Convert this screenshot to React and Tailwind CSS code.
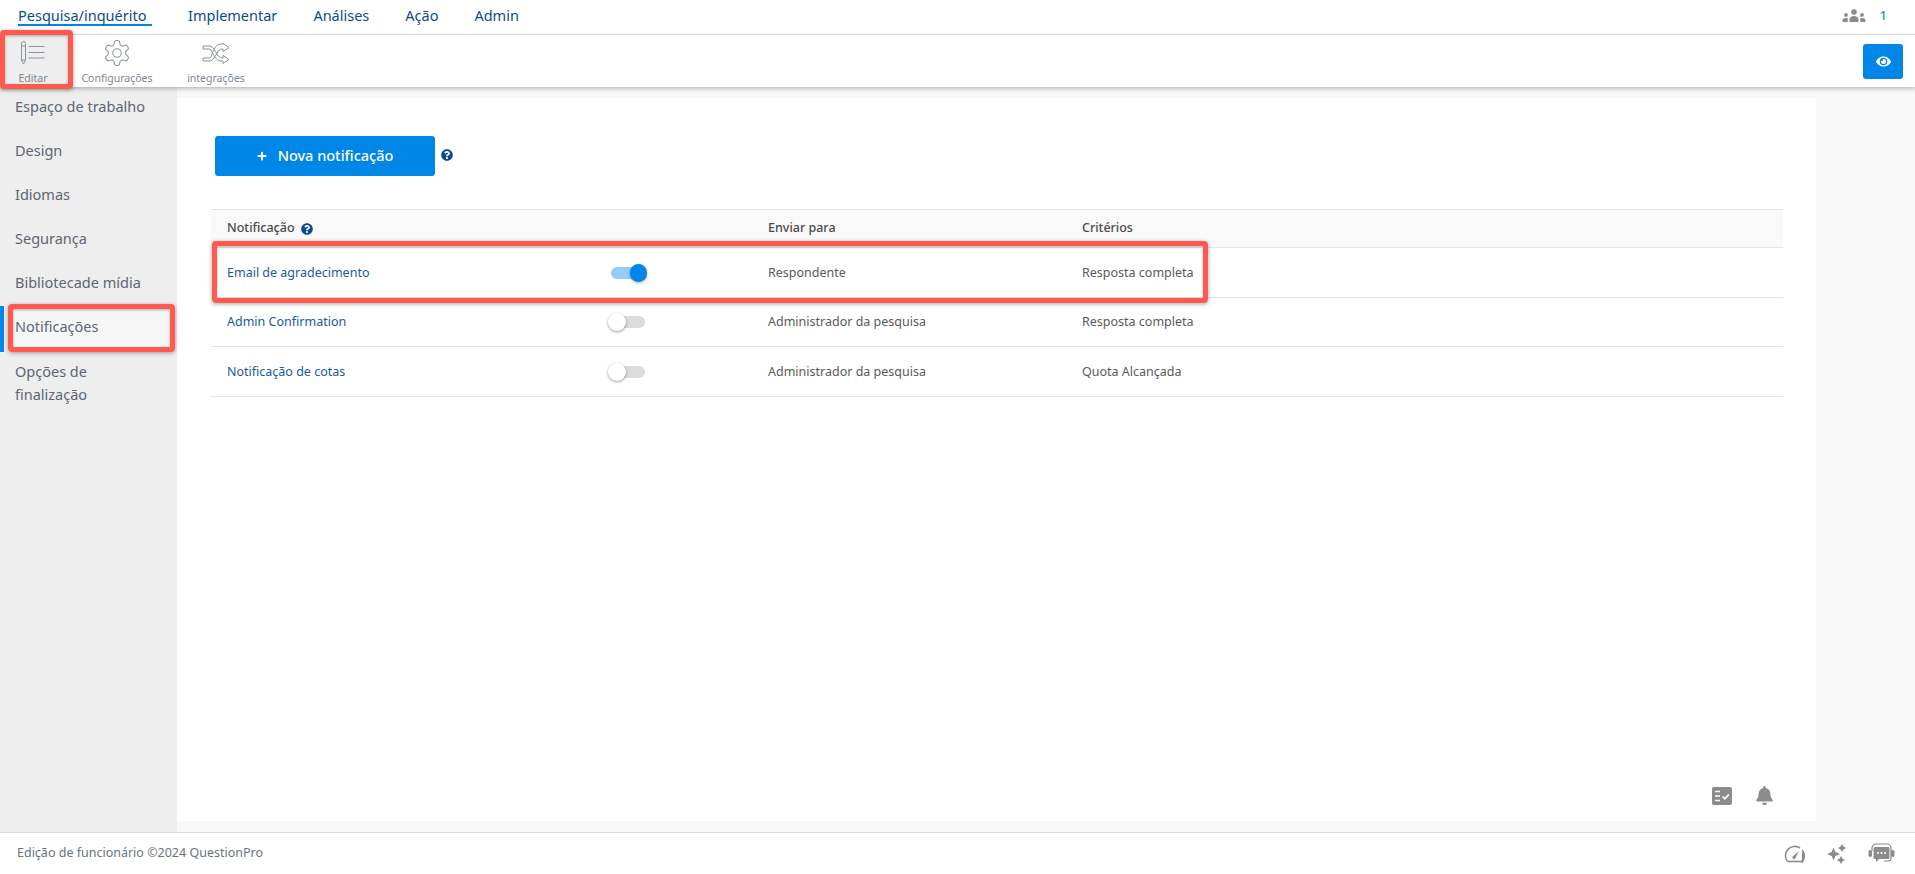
import React from "react";
import { FaQuestionCircle, FaEye, FaBell, FaPlus } from "react-icons/fa";

const font = "font-['Noto_Sans',sans-serif]";

function Help() {
  return <FaQuestionCircle className="w-[12px] h-[12px] text-[#0b4a8f]" />;
}

function EditIcon() {
  return (
    <svg width="30" height="30" viewBox="0 0 30 30" fill="none" stroke="#8a93a0" strokeWidth="1">
      <path d="M3.500 5.500a2 2 0 0 1 4 0V22l-2 4-2-4z" />
      <path d="M3.500 8h4M3.500 22h4" />
      <path d="M10.500 8.500h16M10.500 14.500h16M10.500 20h16" strokeWidth="1.100" />
    </svg>
  );
}

function GearIcon() {
  return (
    <svg width="30" height="30" viewBox="0 0 24 24" fill="none" stroke="#8a93a0" strokeWidth="0.85" strokeLinejoin="round">
      <path d="M12.22 2h-.44a2 2 0 0 0-2 2v.18a2 2 0 0 1-1 1.73l-.43.25a2 2 0 0 1-2 0l-.15-.08a2 2 0 0 0-2.73.73l-.22.38a2 2 0 0 0 .73 2.73l.15.1a2 2 0 0 1 1 1.72v.51a2 2 0 0 1-1 1.74l-.15.09a2 2 0 0 0-.73 2.73l.22.38a2 2 0 0 0 2.73.73l.15-.08a2 2 0 0 1 2 0l.43.25a2 2 0 0 1 1 1.73V20a2 2 0 0 0 2 2h.44a2 2 0 0 0 2-2v-.18a2 2 0 0 1 1-1.73l.43-.25a2 2 0 0 1 2 0l.15.08a2 2 0 0 0 2.73-.73l.22-.39a2 2 0 0 0-.73-2.73l-.15-.08a2 2 0 0 1-1-1.74v-.5a2 2 0 0 1 1-1.74l.15-.09a2 2 0 0 0 .73-2.73l-.22-.38a2 2 0 0 0-2.73-.73l-.15.08a2 2 0 0 1-2 0l-.43-.25a2 2 0 0 1-1-1.73V4a2 2 0 0 0-2-2z" />
      <circle cx="12" cy="12" r="3.4" />
    </svg>
  );
}

function ShuffleIcon() {
  return (
    <svg width="30" height="30" viewBox="0 0 30 30" fill="none" stroke="#8a93a0" strokeWidth="1" strokeLinejoin="round">
      <path d="M2 8h6c3 0 4.500 2 6.500 5.500l1.500 2.500c1.500 2.800 3 4 5 4h1v-2.500l6 4-6 4V23h-2c-3 0-5-2-7-5.500l-1.500-2.500C10.700 12.500 9.500 11 8 11H2z" />
      <path d="M2 23h6c3 0 4.500-2 6.500-5.500l1.500-2.500c1.500-2.800 3-4 5-4h1v2.500l6-4-6-4V6h-2c-3 0-5 2-7 5.500l-1.500 2.500C10.700 18.500 9.500 20 8 20H2z" />
    </svg>
  );
}

function UsersIcon() {
  return (
    <svg width="24" height="14" viewBox="0 0 24 14" fill="#8c8c8c">
      <circle cx="12" cy="3" r="2.800" />
      <path d="M7.500 13v-2.500C7.500 8.300 9.500 7 12 7s4.500 1.300 4.500 3.500V13z" />
      <circle cx="4" cy="6" r="1.900" />
      <path d="M0.500 13v-1.500C0.500 9.800 2 9 4 9c.7 0 1.400.1 2 .4-.2.400-.3.800-.3 1.300V13z" />
      <circle cx="20" cy="6" r="1.900" />
      <path d="M23.500 13v-1.500C23.500 9.800 22 9 20 9c-.7 0-1.400.1-2 .4.200.4.300.8.300 1.300V13z" />
    </svg>
  );
}

function TasksIcon() {
  return (
    <svg width="20" height="18" viewBox="0 0 20 18">
      <rect width="20" height="18" rx="2" fill="#8c8c8c" />
      <path d="M3 4.500h5M3 9h5M3 13.500h5" stroke="#fff" strokeWidth="1.700" />
      <path d="M10.500 9.500l2.300 2.300 4-4.300" stroke="#fff" strokeWidth="1.700" fill="none" />
    </svg>
  );
}

function GaugeIcon() {
  return (
    <svg width="22" height="18" viewBox="0 0 22 18" fill="none" stroke="#8c8c8c" strokeWidth="1.600">
      <path d="M3.500 16.500a9.300 9.300 0 0 1 12.500-13.500M19 6.500a9.300 9.300 0 0 1-.5 10z" />
      <path d="M3.500 16.500h15" />
      <path d="M8.800 11.500l6-5.500-3.500 7.500a1.600 1.600 0 0 1-2.500-2z" fill="#8c8c8c" stroke="none" />
    </svg>
  );
}

function SparkIcon() {
  return (
    <svg width="20" height="20" viewBox="0 0 20 20" fill="#8c8c8c">
      <path d="M6.500 3.500l1.900 4.600L13 10l-4.600 1.900L6.500 16.500l-1.900-4.600L0 10l4.600-1.900z" />
      <path d="M15 0l1.400 2.600L19 4l-2.600 1.400L15 8l-1.400-2.600L11 4l2.600-1.400z" />
      <path d="M14 12l1.400 2.600L18 16l-2.600 1.400L14 20l-1.400-2.600L10 16l2.600-1.400z" />
    </svg>
  );
}

function ChatIcon() {
  return (
    <svg width="27" height="21" viewBox="0 0 27 21" fill="none">
      <path d="M4 8V5a4 4 0 0 1 4-4h11a4 4 0 0 1 4 4v10a3 3 0 0 1-3 3h-4" stroke="#8c8c8c" strokeWidth="1.200" />
      <rect x="0.500" y="7" width="3.500" height="7" rx="1.700" fill="#8c8c8c" />
      <rect x="23" y="7" width="3.500" height="7" rx="1.700" fill="#8c8c8c" />
      <path d="M7 4h13a1.500 1.500 0 0 1 1.500 1.500v9a1.500 1.500 0 0 1-1.500 1.500h-9l-3 3V16H7a1.500 1.500 0 0 1-1.500-1.500v-9A1.500 1.500 0 0 1 7 4z" fill="#8c8c8c" />
      <circle cx="10" cy="10" r="1" fill="#fff" />
      <circle cx="13.500" cy="10" r="1" fill="#fff" />
      <circle cx="17" cy="10" r="1" fill="#fff" />
    </svg>
  );
}

function Toggle({ on }) {
  if (on) {
    return (
      <div className="relative w-[34px] h-[12px] rounded-full bg-[#94cdf7]">
        <div className="absolute right-[-2px] top-[-3px] w-[17px] h-[18px] rounded-full bg-[#0086e6] shadow-[0_1px_3px_rgba(0,0,0,0.35)]" />
      </div>
    );
  }
  return (
    <div className="relative w-[34px] h-[12px] rounded-full bg-[#dcdcdc]">
      <div className="absolute left-[-3px] top-[-3px] w-[18px] h-[18px] rounded-full bg-white shadow-[0_1px_3px_rgba(0,0,0,0.4)]" />
    </div>
  );
}

const NAV = ["Pesquisa/inquérito", "Implementar", "Análises", "Ação", "Admin"];
const SIDE = ["Espaço de trabalho", "Design", "Idiomas", "Segurança", "Bibliotecade mídia", "Notificações"];
const ROWS = [
  { name: "Email de agradecimento", on: true, to: "Respondente", crit: "Resposta completa", h: "h-[50px]" },
  { name: "Admin Confirmation", on: false, to: "Administrador da pesquisa", crit: "Resposta completa", h: "h-[49px]" },
  { name: "Notificação de cotas", on: false, to: "Administrador da pesquisa", crit: "Quota Alcançada", h: "h-[50px]" },
];

const ITEM = "h-[52px] flex flex-col items-center";
const LABEL = "text-[10.5px] text-[#7d8694] leading-[14px] mt-[3px]";
const MARK = "absolute z-20 border-[5px] border-[#ff5a4f] rounded-[4px] shadow-[0_1px_4px_rgba(0,0,0,0.35),inset_0_1px_3px_rgba(0,0,0,0.3)]";

export default function App() {
  return (
    <div className={`${font} relative h-screen w-full overflow-hidden bg-white flex flex-col`}>
      {/* top nav */}
      <div className="h-[35px] shrink-0 border-b border-[#dcdcdc] flex items-center pl-[18px] pr-[28px] bg-white">
        <div className="flex items-center gap-[36px] text-[14.5px] text-[#0b4a8f]">
          {NAV.map((n, i) => (
            <span
              key={n}
              className={i === 0 ? "border-b-2 border-[#0086e6] leading-[18px] h-[20px] mb-[3px] w-[134px]" : "leading-[18px] h-[20px] mb-[3px]"}
            >
              {n}
            </span>
          ))}
        </div>
        <div className="ml-auto flex items-center gap-[14px] mb-[2px]">
          <UsersIcon />
          <span className="text-[13px] text-[#1e90e6] font-medium">1</span>
        </div>
      </div>

      {/* toolbar */}
      <div className="relative z-10 h-[52px] shrink-0 bg-white flex items-start shadow-[0_2px_4px_rgba(0,0,0,0.25)]">
        <div className={`${ITEM} w-[72px] bg-[#eeeeee] pr-[6px]`}>
          <div className="mt-[3px]"><EditIcon /></div>
          <span className={LABEL}>Editar</span>
        </div>
        <div className={`${ITEM} w-[90px]`}>
          <div className="mt-[3px]"><GearIcon /></div>
          <span className={LABEL}>Configurações</span>
        </div>
        <div className={`${ITEM} w-[108px]`}>
          <div className="mt-[3px]"><ShuffleIcon /></div>
          <span className={LABEL}>integrações</span>
        </div>
        <button className="ml-auto mr-[12px] mt-[9px] w-[40px] h-[35px] rounded-[3px] bg-[#0086e6] flex items-center justify-center">
          <FaEye className="w-[15px] h-[15px] text-white" />
        </button>
      </div>

      {/* body */}
      <div className="flex-1 flex min-h-0">
        <aside className="w-[177px] shrink-0 bg-[#eeeeee] text-[14.5px] text-[#5d6672]">
          <div className="flex flex-col -mt-[2px]">
            {SIDE.map((s, i) => (
              <div key={s} className="relative h-[44px] flex items-center pl-[15px]">
                {i === 5 && <div className="absolute left-0 top-[1px] w-[4px] h-[46px] bg-[#0086e6]" />}
                {i === 5 && <div className="absolute left-[10px] right-[4px] top-0 bottom-[-2px] bg-[#f6f6f6]" />}
                <span className="relative">{s}</span>
              </div>
            ))}
            <div className="pl-[15px] pt-[11px] leading-[23px]">Opções de<br />finalização</div>
          </div>
        </aside>
        <main className="flex-1 bg-[#f8f8f8] pt-[11px] pb-[11px] pr-[99px]">
          <div className="h-full bg-white relative">
            <div className="flex flex-col pl-[34px] pr-[33px] pt-[38px]">
              <div className="flex items-center pl-[4px] gap-[6px]">
                <button className="w-[220px] h-[40px] rounded-[3px] bg-[#0086e6] text-white text-[14.5px] font-medium flex items-center justify-center gap-[11px]">
                  <FaPlus className="w-[10px] h-[10px]" />
                  Nova notificação
                </button>
                <span className="mb-[2px] flex"><Help /></span>
              </div>

              <div className="mt-[33px] border-t border-[#e6e6e6]">
                <div className="h-[38px] bg-[#f9f9f9] border-b border-[#e6e6e6] grid grid-cols-[557px_314px_1fr] items-center text-[12.5px] font-medium text-[#4a4a4a]">
                  <div className="pl-[16px] flex items-center gap-[6px]">Notificação <Help /></div>
                  <div>Enviar para</div>
                  <div>Critérios</div>
                </div>
                {ROWS.map((r) => (
                  <div key={r.name} className={`${r.h} border-b border-[#e3e3e3] grid grid-cols-[400px_157px_314px_1fr] items-center text-[12.5px] text-[#5a5a5a]`}>
                    <div className="pl-[16px] pt-[1px] text-[#1a5a9e]">{r.name}</div>
                    <div><Toggle on={r.on} /></div>
                    <div className="pt-[1px]">{r.to}</div>
                    <div className="pt-[1px]">{r.crit}</div>
                  </div>
                ))}
              </div>
            </div>
            <div className="absolute right-[43px] bottom-[16px] flex items-center gap-[24px]">
              <TasksIcon />
              <FaBell className="w-[17px] h-[19px] text-[#8c8c8c]" />
            </div>
          </div>
        </main>
      </div>

      {/* footer */}
      <div className="h-[42px] shrink-0 border-t border-[#dcdcdc] bg-white flex items-center pl-[17px] pr-[20px]">
        <span className="text-[12.5px] text-[#6b7480]">Edição de funcionário ©2024 QuestionPro</span>
        <div className="ml-auto flex items-center gap-[21px]">
          <GaugeIcon />
          <SparkIcon />
          <ChatIcon />
        </div>
      </div>

      {/* annotation rectangles over the page */}
      <div className={`${MARK} left-0 top-[30px] w-[73px] h-[59px]`} />
      <div className={`${MARK} left-[8px] top-[304px] w-[167px] h-[48px]`} />
      <div className={`${MARK} left-[212px] top-[241px] w-[996px] h-[62px]`} />
    </div>
  );
}
